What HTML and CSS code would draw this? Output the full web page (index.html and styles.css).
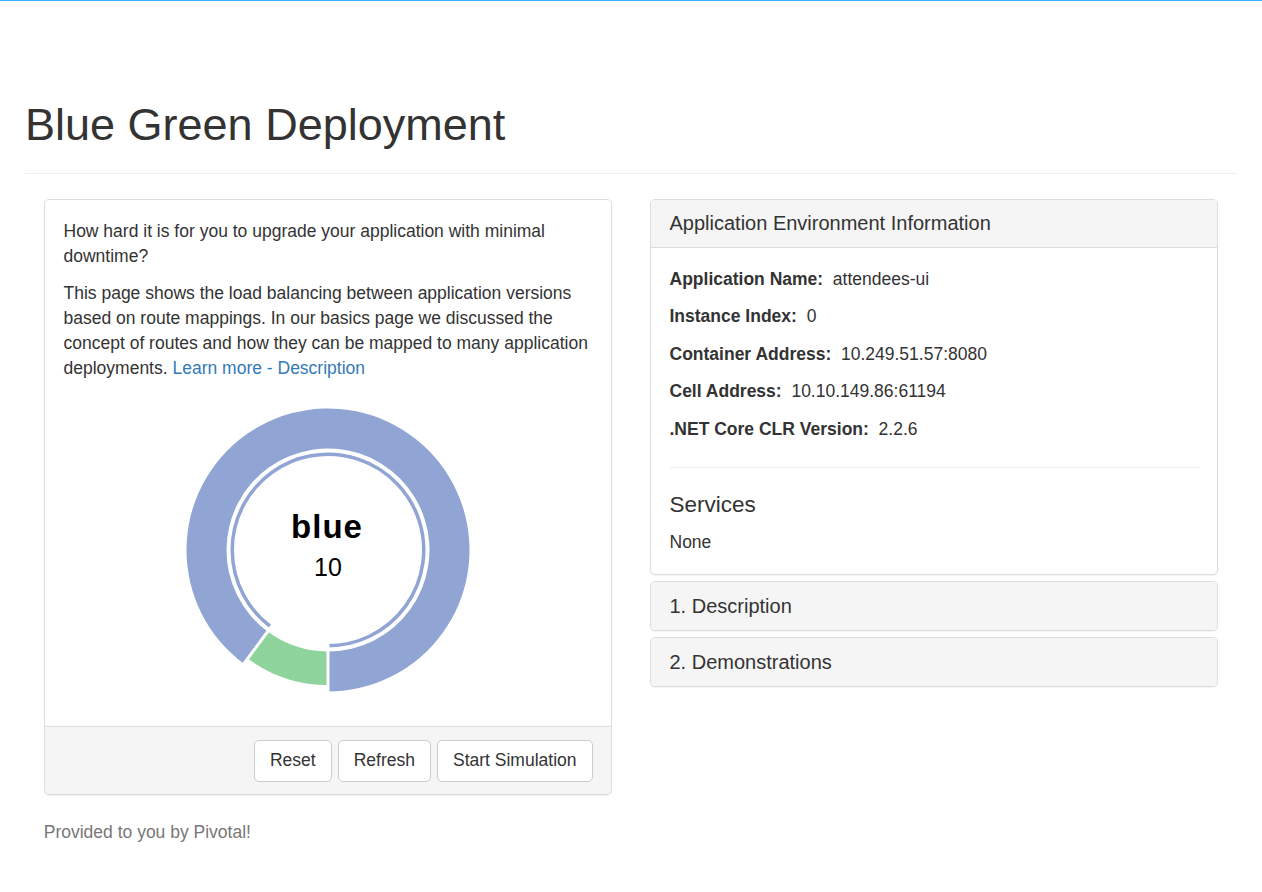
FILE: index.html
```html
<!DOCTYPE html>
<html lang="en">
<head>
<meta charset="utf-8">
<title>Blue Green Deployment</title>
<link rel="stylesheet" href="styles.css">
</head>
<body>
<div class="topline"></div>
<div class="container">
  <div class="page-header">
    <h1>Blue Green Deployment</h1>
  </div>
  <div class="row">
    <div class="col">
      <div class="panel">
        <div class="panel-body">
          <p>How hard it is for you to upgrade your application with minimal downtime?</p>
          <p>This page shows the load balancing between application versions based on route mappings. In our basics page we discussed the concept of routes and how they can be mapped to many application deployments. <a href="#">Learn more - Description</a></p>
          <div class="chart">
            <svg class="donut" width="312" height="312" viewBox="0 0 312 312">
              <path class="arc-blue" d="M 71.84 269.75 A 141.5 141.5 0 1 1 156 297.5 L 156 257.5 A 101.5 101.5 0 1 0 95.63 237.60 Z"/>
              <path class="arc-green" d="M 156 291 A 135 135 0 0 1 75.70 264.53 L 95.63 237.60 A 101.5 101.5 0 0 0 156 257.5 Z"/>
              <path class="arc-inner" d="M 99.05 232.97 A 95.75 95.75 0 1 1 156 251.75"/>
              <line class="sep" x1="156" y1="244" x2="156" y2="306"/>
              <line class="sep" x1="103.66" y1="226.74" x2="66.78" y2="276.59"/>
              <text class="label-name" x="155" y="144">blue</text>
              <text class="label-value" x="156" y="182">10</text>
            </svg>
          </div>
        </div>
        <div class="panel-footer">
          <button class="btn">Reset</button>
          <button class="btn">Refresh</button>
          <button class="btn">Start Simulation</button>
        </div>
      </div>
      <p class="muted">Provided to you by Pivotal!</p>
    </div>
    <div class="col">
      <div class="panel">
        <div class="panel-heading">Application Environment Information</div>
        <div class="panel-body">
          <p class="info"><strong>Application Name:</strong>&nbsp; attendees-ui</p>
          <p class="info"><strong>Instance Index:</strong>&nbsp; 0</p>
          <p class="info"><strong>Container Address:</strong>&nbsp; 10.249.51.57:8080</p>
          <p class="info"><strong>Cell Address:</strong>&nbsp; 10.10.149.86:61194</p>
          <p class="info"><strong>.NET Core CLR Version:</strong>&nbsp; 2.2.6</p>
          <hr class="divider">
          <h4 class="services-title">Services</h4>
          <div class="services-value">None</div>
        </div>
      </div>
      <div class="panel collapsed">
        <div class="panel-heading plain">1. Description</div>
      </div>
      <div class="panel collapsed">
        <div class="panel-heading plain">2. Demonstrations</div>
      </div>
    </div>
  </div>
</div>
</body>
</html>
```

FILE: styles.css
```css
html, body {
  margin: 0;
  padding: 0;
  background: #fff;
}
body {
  font-family: "Liberation Sans", Arial, Helvetica, sans-serif;
  font-size: 17.5px;
  line-height: 25px;
  color: #333;
}
.topline {
  height: 1px;
  background: #3aaeff;
}
.container {
  padding: 0 25px;
}
.page-header {
  padding-top: 98.5px;
  padding-bottom: 23.75px;
  border-bottom: 1px solid #eee;
  margin-bottom: 25px;
}
.page-header h1 {
  margin: 0;
  font-size: 45px;
  line-height: 49.5px;
  font-weight: normal;
  color: #333;
}
.row {
  display: grid;
  grid-template-columns: 1fr 1fr;
}
.col {
  padding: 0 18.75px;
  min-width: 0;
}
.panel {
  background: #fff;
  border: 1px solid #ddd;
  border-radius: 5px;
  box-shadow: 0 1px 1px rgba(0, 0, 0, 0.05);
  margin-bottom: 25px;
}
.col .panel + .panel {
  margin-top: -19px;
}
.panel-body {
  padding: 18.75px;
}
.panel-body p {
  margin: 0 0 12.5px;
}
a {
  color: #337ab7;
  text-decoration: none;
}
.chart {
  display: flex;
  justify-content: center;
  padding-bottom: 2px;
}
.donut {
  display: block;
}
.arc-blue {
  fill: #90a5d4;
}
.arc-green {
  fill: #8fd49c;
}
.arc-inner {
  fill: none;
  stroke: #90a5d4;
  stroke-width: 3.5;
}
.sep {
  stroke: #fff;
  stroke-width: 3;
}
.label-name {
  font-family: "Liberation Sans", Arial, sans-serif;
  font-weight: bold;
  font-size: 33px;
  letter-spacing: 1px;
  text-anchor: middle;
  fill: #000;
}
.label-value {
  font-family: "Liberation Sans", Arial, sans-serif;
  font-size: 25px;
  text-anchor: middle;
  fill: #000;
}
.panel-footer {
  background: #f5f5f5;
  border-top: 1px solid #ddd;
  border-radius: 0 0 4px 4px;
  padding: 12.5px 18.75px;
  display: flex;
  justify-content: flex-end;
  gap: 6px;
}
.btn {
  font-family: "Liberation Sans", Arial, sans-serif;
  font-size: 17.5px;
  line-height: 25px;
  color: #333;
  background: #fff;
  border: 1px solid #ccc;
  border-radius: 5px;
  padding: 7.5px 15px;
  margin: 0;
}
.muted {
  color: #777;
  margin: 0;
}
.panel-heading {
  background: #f5f5f5;
  border-bottom: 1px solid #ddd;
  border-radius: 4px 4px 0 0;
  padding: 12.5px 18.75px 12.5px;
  font-size: 20px;
  line-height: 22px;
  color: #333;
}
.panel-heading.plain {
  border-bottom: none;
  border-radius: 4px;
  padding: 13px 18.75px;
}
.panel-body p.info {
  margin: 0 0 12.5px;
}
.divider {
  border: 0;
  border-top: 1px solid #eee;
  margin: 25px 0;
}
.services-title {
  font-size: 22.5px;
  line-height: 24.75px;
  font-weight: normal;
  margin: 0 0 12.5px;
}
.services-value {
  margin: 0;
}
```
